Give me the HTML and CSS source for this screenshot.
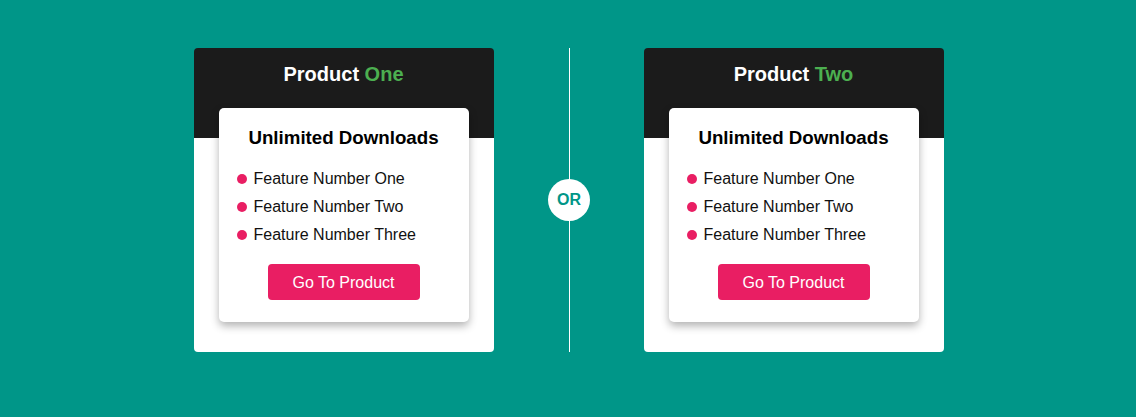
FILE: index.html
```html
<!DOCTYPE html>
<html>
<head>
<meta charset="utf-8">
<link rel="stylesheet" href="styles.css">
</head>
<body>
<div class="wrap">
  <div class="card">
    <h2 class="name">Product <span class="accent">One</span></h2>
    <div class="inner">
      <h3 class="title">Unlimited Downloads</h3>
      <ul class="features">
        <li>Feature Number One</li>
        <li>Feature Number Two</li>
        <li>Feature Number Three</li>
      </ul>
      <a class="btn" href="#">Go To Product</a>
    </div>
  </div>
  <div class="divider"><span class="or">OR</span></div>
  <div class="card">
    <h2 class="name">Product <span class="accent">Two</span></h2>
    <div class="inner">
      <h3 class="title">Unlimited Downloads</h3>
      <ul class="features">
        <li>Feature Number One</li>
        <li>Feature Number Two</li>
        <li>Feature Number Three</li>
      </ul>
      <a class="btn" href="#">Go To Product</a>
    </div>
  </div>
</div>
</body>
</html>
```

FILE: styles.css
```css
html, body {
  margin: 0;
  padding: 0;
  background: #009688;
  font-family: "Liberation Sans", Arial, sans-serif;
}
.wrap {
  display: flex;
  justify-content: center;
  padding-top: 48px;
  padding-left: 1px;
}
.card {
  width: 300px;
  box-sizing: border-box;
  height: 304px;
  padding: 15px 25px 30px;
  border-radius: 4px;
  background: linear-gradient(#1b1b1b 0, #1b1b1b 90px, #fff 90px);
}
.name {
  margin: 0 0 22px;
  font-size: 20px;
  line-height: 23px;
  font-weight: bold;
  color: #fff;
  text-align: center;
}
.accent { color: #4caf50; }
.inner {
  background: #fff;
  border-radius: 5px;
  box-shadow: 0 4px 9px rgba(0,0,0,0.3);
  padding: 19px 18px 22px;
  display: flex;
  flex-direction: column;
  align-items: center;
}
.title {
  margin: 0 0 16px;
  font-size: 18.72px;
  line-height: 22px;
  font-weight: bold;
  color: #000;
}
.features {
  list-style: none;
  margin: 0 0 15px;
  padding: 0;
  align-self: stretch;
}
.features li {
  display: flex;
  align-items: center;
  gap: 7px;
  font-size: 16px;
  line-height: 28px;
  color: #111;
}
.features li::before {
  content: "";
  width: 10px;
  height: 10px;
  border-radius: 50%;
  background: #e91e63;
}
.btn {
  display: block;
  box-sizing: border-box;
  width: 152px;
  height: 36px;
  padding-top: 1px;
  line-height: 35px;
  text-align: center;
  background: #e91e63;
  color: #fff;
  font-size: 16px;
  text-decoration: none;
  border-radius: 4px;
}
.divider {
  width: 150px;
  height: 304px;
  display: flex;
  align-items: center;
  justify-content: center;
  background: linear-gradient(#fff, #fff) 75px 0 / 1px 100% no-repeat;
}
.or {
  width: 42px;
  height: 42px;
  border-radius: 50%;
  background: #fff;
  color: #009688;
  font-weight: bold;
  font-size: 16px;
  display: flex;
  align-items: center;
  justify-content: center;
  margin-left: 1px;
}
```
